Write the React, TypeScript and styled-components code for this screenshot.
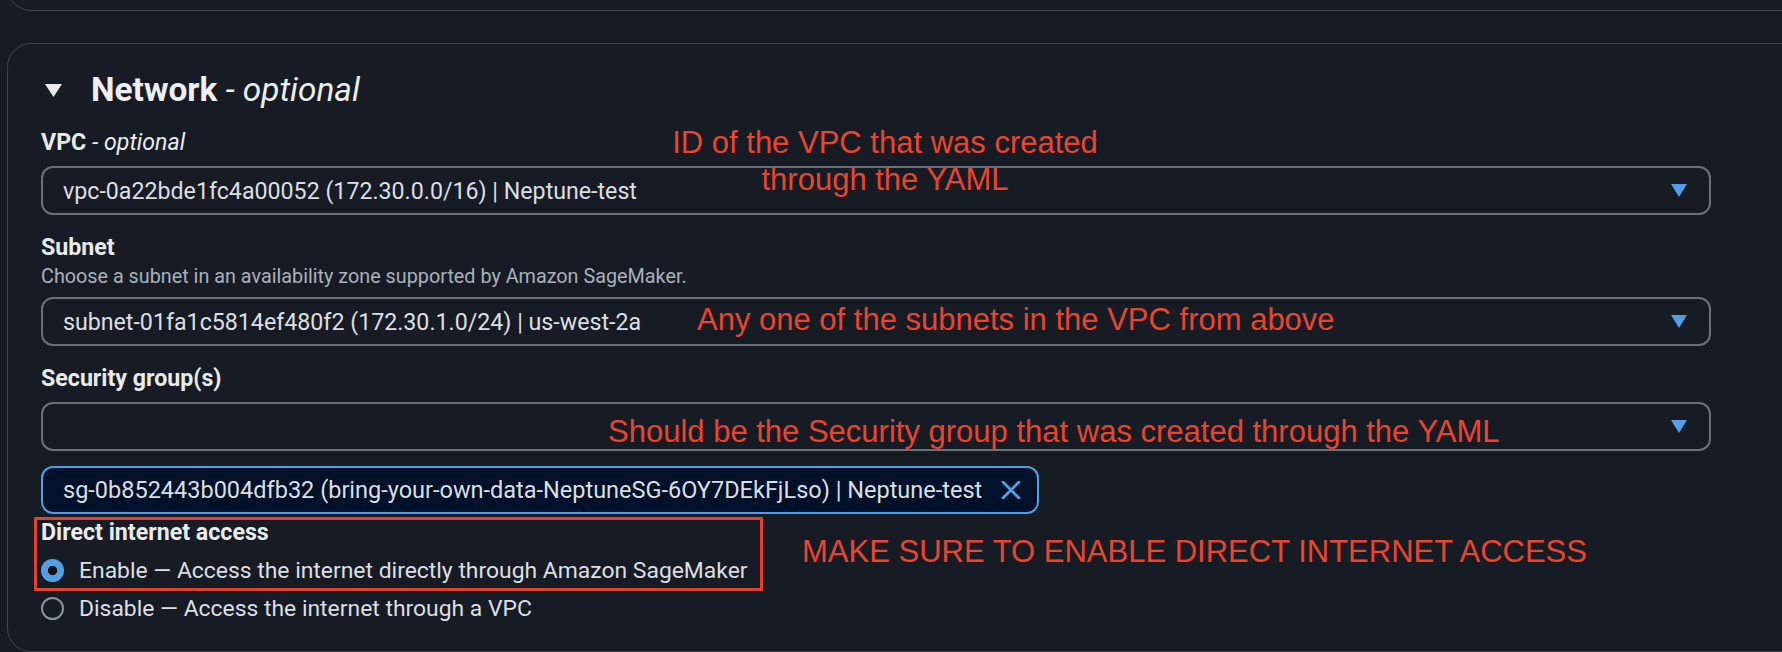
import React from 'react';
import styled, { createGlobalStyle } from 'styled-components';

const GlobalStyle = createGlobalStyle`
    html,
    body {
        margin: 0;
        padding: 0;
        background: #171c24;
        overflow: hidden;
    }
    body {
        font-family: Roboto, 'Noto Sans', sans-serif;
        color: #e9ebed;
    }
`;

const ChevronDown: React.FC = () => (
    <svg width="16" height="13" viewBox="0 0 16 13">
        <polygon points="0,0 16,0 8,13" fill="#539fe5" />
    </svg>
);

const CloseIcon: React.FC = () => (
    <svg width="20" height="18" viewBox="0 0 20 18">
        <path d="M2 1 L18 17 M18 1 L2 17" stroke="#539fe5" strokeWidth="2.8" strokeLinecap="round" fill="none" />
    </svg>
);

const App: React.FC = () => {
    return (
        <Page>
            <GlobalStyle />
            <PreviousCard />
            <Card>
                <Header>
                    <svg width="17" height="13" viewBox="0 0 17 13">
                        <polygon points="0,0 17,0 8.5,13" fill="#e9ebed" />
                    </svg>
                    <HeaderTitle>
                        Network <Optional>- optional</Optional>
                    </HeaderTitle>
                </Header>

                <Fields>
                    <Field>
                        <Label>
                            VPC <Optional>- optional</Optional>
                        </Label>
                        <Select>
                            <span>vpc-0a22bde1fc4a00052 (172.30.0.0/16) | Neptune-test</span>
                            <ChevronDown />
                        </Select>
                    </Field>

                    <Field>
                        <Label>Subnet</Label>
                        <Description>Choose a subnet in an availability zone supported by Amazon SageMaker.</Description>
                        <Select>
                            <span>subnet-01fa1c5814ef480f2 (172.30.1.0/24) | us-west-2a</span>
                            <ChevronDown />
                        </Select>
                    </Field>

                    <Field>
                        <Label>Security group(s)</Label>
                        <Select>
                            <span />
                            <ChevronDown />
                        </Select>
                        <Token>
                            <span>sg-0b852443b004dfb32 (bring-your-own-data-NeptuneSG-6OY7DEkFjLso) | Neptune-test</span>
                            <CloseIcon />
                        </Token>
                    </Field>

                    <RadioGroup>
                        <Label>Direct internet access</Label>
                        <RadioRow>
                            <Radio $checked />
                            <span>Enable — Access the internet directly through Amazon SageMaker</span>
                        </RadioRow>
                        <RadioRow>
                            <Radio />
                            <span>Disable — Access the internet through a VPC</span>
                        </RadioRow>
                        <Highlight />
                    </RadioGroup>
                </Fields>
            </Card>

            <Note $left={635} $top={125} $center>
                ID of the VPC that was created
                <br />
                through the YAML
            </Note>
            <Note $left={697} $top={302}>
                Any one of the subnets in the VPC from above
            </Note>
            <Note $left={608} $top={414}>
                Should be the Security group that was created through the YAML
            </Note>
            <Note $left={802} $top={534}>
                MAKE SURE TO ENABLE DIRECT INTERNET ACCESS
            </Note>
        </Page>
    );
};

const Page = styled.div`
    position: relative;
    width: 1782px;
    height: 652px;
    box-sizing: border-box;
    padding-left: 7px;
    display: flex;
    flex-direction: column;
    gap: 32px;
    overflow: hidden;
`;

const PreviousCard = styled.div`
    flex: none;
    box-sizing: border-box;
    margin-top: -40px;
    width: 1900px;
    height: 51px;
    border: 1px solid #3e444d;
    border-radius: 24px;
`;

const Card = styled.div`
    flex: none;
    box-sizing: border-box;
    width: 1900px;
    height: 609px;
    padding: 26px 0 0 33px;
    border: 1px solid #3e444d;
    border-radius: 24px;
`;

const Header = styled.div`
    display: flex;
    align-items: center;
    gap: 29px;
    padding-left: 4px;
    height: 40px;
`;

const HeaderTitle = styled.h2`
    margin: 0;
    font-size: 33.4px;
    line-height: 40px;
    font-weight: 700;
    color: #eceef0;
`;

const Optional = styled.span`
    font-style: italic;
    font-weight: 400;
`;

const Fields = styled.div`
    display: flex;
    flex-direction: column;
    gap: 16px;
    width: 1670px;
    margin-top: 16px;
`;

const Field = styled.div`
    display: flex;
    flex-direction: column;
`;

const Label = styled.div`
    font-size: 23.2px;
    line-height: 33px;
    font-weight: 700;
    color: #e9ebed;
`;

const Description = styled.div`
    font-size: 19.8px;
    line-height: 26px;
    color: #a9b1bc;
`;

const Select = styled.div`
    box-sizing: border-box;
    height: 49px;
    margin-top: 7px;
    display: flex;
    align-items: center;
    justify-content: space-between;
    padding: 0 22px 0 20px;
    border: 2px solid #6b717b;
    border-radius: 12px;
    font-size: 23.2px;
    color: #dcdfe3;
`;

const Token = styled.div`
    box-sizing: border-box;
    align-self: flex-start;
    height: 48px;
    margin-top: 15px;
    display: flex;
    align-items: center;
    gap: 19px;
    padding: 0 16px 0 20px;
    border: 2px solid #539fe5;
    border-radius: 12px;
    background: #001129;
    font-size: 23.5px;
    color: #dcdfe3;
`;

const RadioGroup = styled.div`
    position: relative;
    display: flex;
    flex-direction: column;
    gap: 5px;
    margin-top: -14px;
`;

const RadioRow = styled.div`
    display: flex;
    align-items: center;
    gap: 15px;
    font-size: 22.9px;
    line-height: 33px;
    color: #dcdfe3;
`;

const Radio = styled.span<{ $checked?: boolean }>`
    flex: none;
    box-sizing: border-box;
    width: 23px;
    height: 23px;
    border-radius: 50%;
    ${(p) =>
        p.$checked
            ? 'background: radial-gradient(circle, #10151b 0 4.4px, #539fe5 5px);'
            : 'border: 2.5px solid #8a939e;'}
`;

const Highlight = styled.div`
    position: absolute;
    left: -7px;
    top: 1px;
    width: 729px;
    height: 74px;
    box-sizing: border-box;
    border: 3.5px solid #e4402a;
    pointer-events: none;
`;

const Note = styled.div<{ $left: number; $top: number; $center?: boolean }>`
    position: absolute;
    left: ${(p) => p.$left}px;
    top: ${(p) => p.$top}px;
    width: ${(p) => (p.$center ? '500px' : 'auto')};
    text-align: ${(p) => (p.$center ? 'center' : 'left')};
    white-space: nowrap;
    font-family: 'Liberation Sans', Arial, sans-serif;
    font-size: 31px;
    line-height: 36.7px;
    color: #e8452f;
`;

export default App;
